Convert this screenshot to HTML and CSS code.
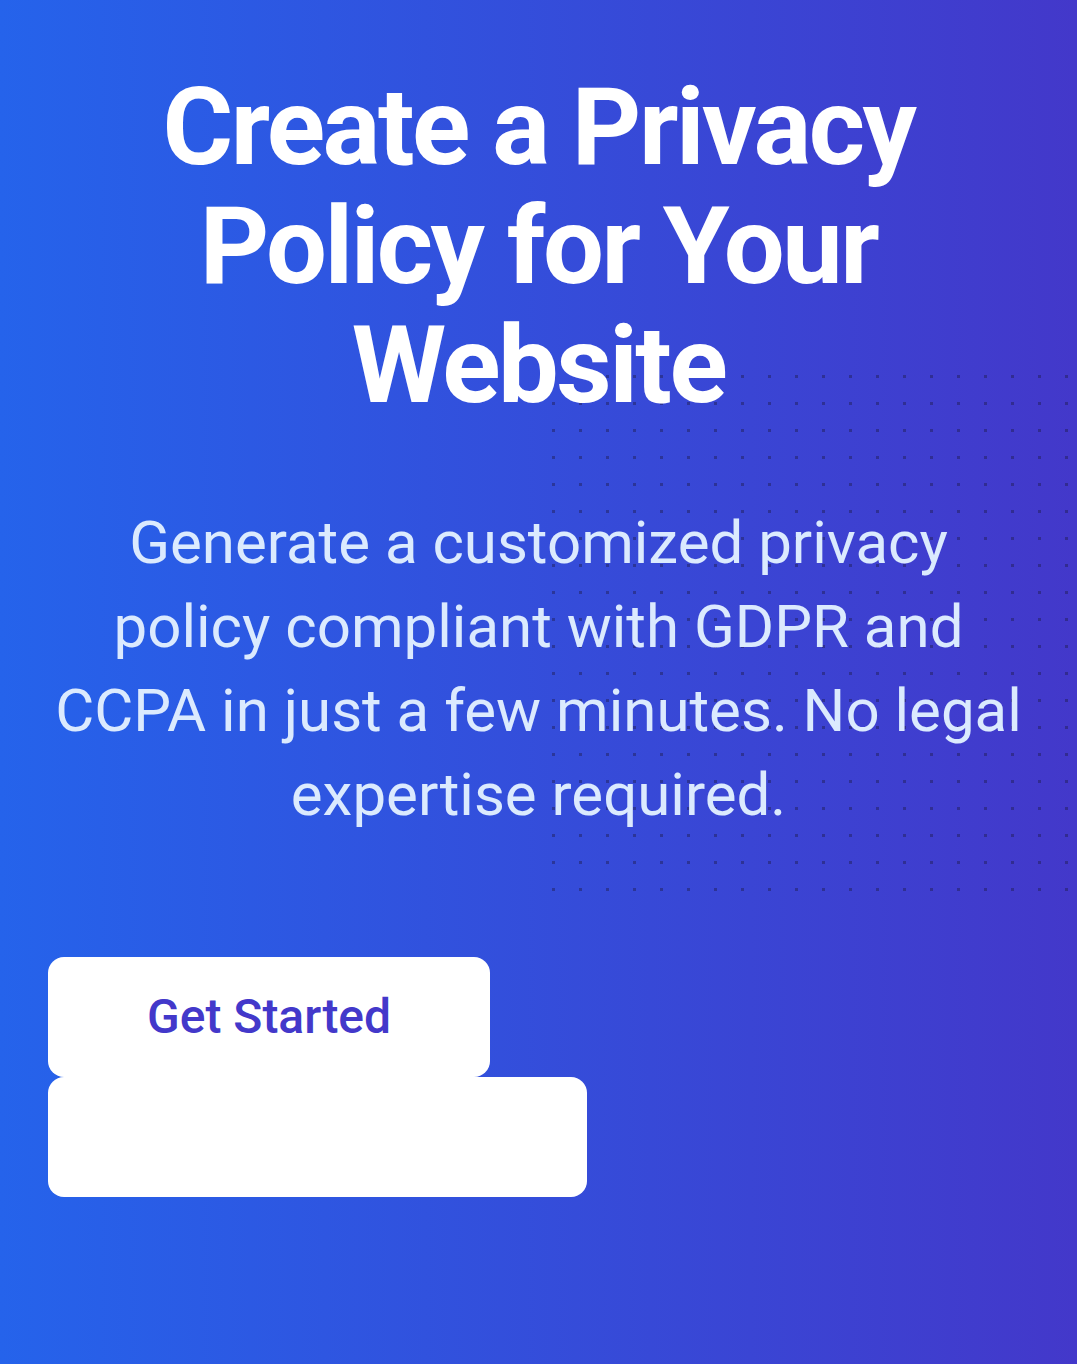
FILE: index.html
```html
<!DOCTYPE html>
<html lang="en">
<head>
<meta charset="utf-8">
<title>Create a Privacy Policy</title>
<link rel="stylesheet" href="styles.css">
</head>
<body>
<section class="hero">
  <div class="dots" aria-hidden="true"></div>
  <div class="hero-inner">
    <h1 class="hero-title">Create a Privacy Policy for Your Website</h1>
    <p class="hero-text">Generate a customized privacy policy compliant with GDPR and CCPA in just a few minutes. No legal expertise required.</p>
    <div class="actions">
      <a class="btn btn-primary" href="#">Get Started</a>
      <a class="btn btn-secondary" href="#">View Templates</a>
    </div>
  </div>
</section>
</body>
</html>
```
FILE: styles.css
```css
html, body {
  margin: 0;
  padding: 0;
}
body {
  font-family: Roboto, "Liberation Sans", sans-serif;
}
.hero {
  position: relative;
  overflow: hidden;
  min-height: 1364px;
  box-sizing: border-box;
  background: linear-gradient(to right, #2563eb, #4338ca);
}
.dots {
  position: absolute;
  left: 540px;
  top: 363px;
  width: 540px;
  height: 540px;
  background-image: radial-gradient(circle, rgba(30, 27, 75, 0.45) 1.5px, transparent 2px);
  background-size: 27px 27px;
  background-position: 0 0;
}
.hero-inner {
  position: relative;
  padding: 68px 48px 0;
  display: flex;
  flex-direction: column;
}
.hero-title {
  margin: 0;
  text-align: center;
  color: #ffffff;
  font-size: 108px;
  line-height: 1.1;
  font-weight: 700;
  letter-spacing: -0.023em;
}
.hero-text {
  margin: 77px 0 0;
  text-align: center;
  color: #dbeafe;
  font-size: 60px;
  line-height: 84px;
  font-weight: 400;
}
.actions {
  margin-top: 120px;
  display: flex;
  flex-direction: column;
  align-items: flex-start;
}
.btn {
  display: inline-block;
  padding: 24px 99px;
  border-radius: 16px;
  background: #ffffff;
  font-size: 48px;
  line-height: 72px;
  font-weight: 500;
  text-decoration: none;
}
.btn-primary {
  color: #4338ca;
}
.btn-secondary {
  color: #ffffff;
}
```
